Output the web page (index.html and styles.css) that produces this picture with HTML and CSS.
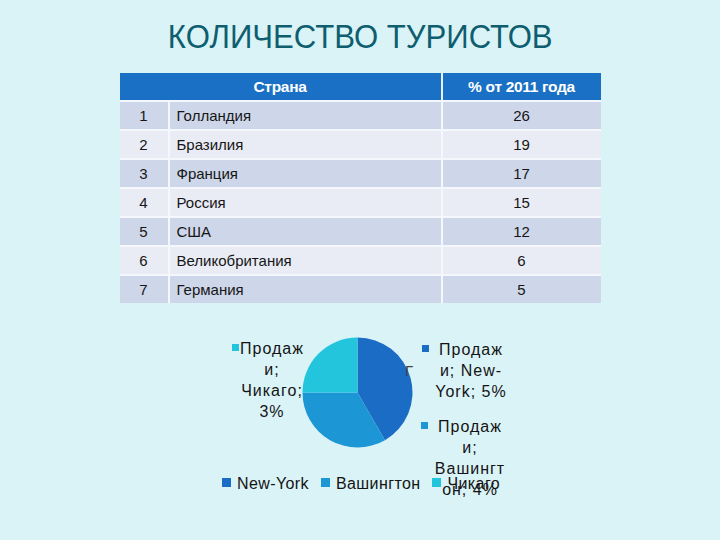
FILE: index.html
```html
<!DOCTYPE html>
<html lang="ru">
<head>
<meta charset="utf-8">
<title>Количество туристов</title>
<link rel="stylesheet" href="styles.css">
</head>
<body>
<main class="slide">
  <h1 class="title"><span class="title-text">КОЛИЧЕСТВО ТУРИСТОВ</span></h1>
  <table class="stats">
    <colgroup><col class="c-num"><col class="c-name"><col class="c-val"></colgroup>
    <thead>
      <tr><th colspan="2">Страна</th><th class="th-val">% от 2011 года</th></tr>
    </thead>
    <tbody>
      <tr class="odd"><td class="num">1</td><td class="name">Голландия</td><td class="val">26</td></tr>
      <tr class="even"><td class="num">2</td><td class="name">Бразилия</td><td class="val">19</td></tr>
      <tr class="odd"><td class="num">3</td><td class="name">Франция</td><td class="val">17</td></tr>
      <tr class="even"><td class="num">4</td><td class="name">Россия</td><td class="val">15</td></tr>
      <tr class="odd"><td class="num">5</td><td class="name">США</td><td class="val">12</td></tr>
      <tr class="even"><td class="num">6</td><td class="name">Великобритания</td><td class="val">6</td></tr>
      <tr class="odd"><td class="num">7</td><td class="name">Германия</td><td class="val">5</td></tr>
    </tbody>
  </table>
  <section class="chart">
    <svg class="pie" width="111" height="111" viewBox="0 0 111 111">
      <path class="s-ny" d="M55.5 55.5 L55.5 0.5 A55 55 0 0 1 83 103.13 Z"/>
      <path class="s-wash" d="M55.5 55.5 L83 103.13 A55 55 0 0 1 0.5 55.5 Z"/>
      <path class="s-chi" d="M55.5 55.5 L0.5 55.5 A55 55 0 0 1 55.5 0.5 Z"/>
    </svg>
    <span class="ghost">Г</span>
    <div class="label label-chi"><span class="key key-tight k-chi"></span>Продаж<br>и;<br>Чикаго;<br>3%</div>
    <div class="label label-ny"><span class="key k-ny"></span>Продаж<br>и; New-<br>York; 5%</div>
    <div class="label label-wash"><span class="key k-wash"></span>Продаж<br>и;<br>Вашингт<br>он; 4%</div>
    <ul class="legend">
      <li class="legend-item"><span class="lkey k-ny"></span>New-York</li>
      <li class="legend-item"><span class="lkey k-wash"></span>Вашингтон</li>
      <li class="legend-item"><span class="lkey k-chi"></span>Чикаго</li>
    </ul>
  </section>
</main>
</body>
</html>
```
FILE: styles.css
```css
html, body {
  margin: 0;
  padding: 0;
}
body {
  background: #daf3f7;
  width: 720px;
  height: 540px;
  overflow: hidden;
  font-family: "Liberation Sans", Arial, sans-serif;
}
.slide {
  display: flex;
  flex-direction: column;
  width: 720px;
  height: 540px;
}
.title {
  margin: 0;
  padding-top: 19px;
  text-align: center;
  font-weight: normal;
  font-size: 34px;
  line-height: 34px;
  color: #0e5e6f;
}
.title-text {
  display: inline-block;
  transform: scaleX(0.915);
  transform-origin: center;
}
.stats {
  margin: 20px auto 0;
  width: 481px;
  table-layout: fixed;
  border-collapse: separate;
  border-spacing: 0;
  font-size: 15px;
  line-height: 19px;
  color: #161616;
}
.c-num { width: 48px; }
.c-name { width: 273px; }
.c-val { width: 160px; }
.stats th {
  background: #1a70c4;
  color: #fff;
  font-weight: bold;
  font-size: 15.5px;
  letter-spacing: -0.3px;
  padding: 4px 0;
  text-align: center;
}
.stats th.th-val {
  border-left: 2px solid #e6f2fa;
}
.stats td {
  border-top: 2px solid #f4f7fb;
  padding: 4px 0;
}
.stats td + td {
  border-left: 2px solid #f4f7fb;
}
.odd td { background: #ced6ea; }
.even td { background: #e9ecf5; }
.num, .val { text-align: center; }
.name { padding-left: 7px !important; }

.chart {
  position: relative;
  margin-top: 7px;
  height: 230px;
  color: #141414;
  font-size: 16px;
  line-height: 21px;
}
.pie {
  position: absolute;
  left: 302px;
  top: 27px;
}
.s-ny { fill: #1b6cc4; }
.s-wash { fill: #1d96d6; }
.s-chi { fill: #23c5dd; }
.ghost {
  position: absolute;
  left: 405px;
  top: 50px;
  font-size: 15px;
  color: #444;
  font-weight: 300;
}
.label {
  position: absolute;
  width: 90px;
  text-align: center;
  white-space: nowrap;
  letter-spacing: 1px;
}
.label-chi { left: 227px; top: 28px; }
.label-ny { left: 426px; top: 29px; }
.label-wash { left: 425px; top: 106px; }
.key {
  display: inline-block;
  width: 7px;
  height: 7px;
  margin-left: -17px;
  margin-right: 10px;
  vertical-align: 3px;
}
.key-tight {
  margin-left: -8px;
  margin-right: 1px;
}
.k-ny { background: #1b6cc4; }
.k-wash { background: #1d96d6; }
.k-chi { background: #23c5dd; }
.legend {
  position: absolute;
  left: 222px;
  top: 163px;
  margin: 0;
  padding: 0;
  list-style: none;
  display: flex;
  gap: 12px;
  letter-spacing: 0.4px;
}
.legend-item {
  display: flex;
  align-items: center;
  gap: 6px;
}
.lkey {
  width: 9px;
  height: 9px;
  margin-bottom: 3px;
}
```
